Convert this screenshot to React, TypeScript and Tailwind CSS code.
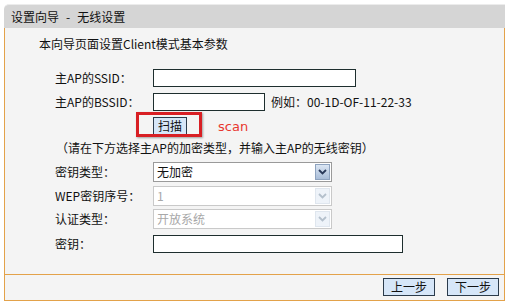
import React from "react";

const font = { fontFamily: '"Noto Sans CJK SC", "Liberation Sans", sans-serif' };

function Chevron({ disabled }: { disabled?: boolean }) {
  return (
    <svg width="9" height="6" viewBox="0 0 9 6">
      <path
        d="M1 1 L4.5 4.5 L8 1"
        fill="none"
        stroke={disabled ? "#b4c0cc" : "#2a3a5a"}
        strokeWidth="1.8"
      />
    </svg>
  );
}

function FakeSelect({ value, disabled }: { value: string; disabled?: boolean }) {
  return (
    <div
      className={`flex h-[20px] w-[179px] items-stretch border bg-white ${
        disabled ? "border-[#c9c9c9] text-[#a8a8a8]" : "border-[#9a9a9a] text-[#111]"
      }`}
    >
      <div className="flex flex-1 items-center pl-[3px] text-[12px] leading-none">{value}</div>
      <div
        className={`m-px flex w-[15px] items-center justify-center border ${
          disabled
            ? "border-[#dfe6ee] bg-[#eef3f9]"
            : "border-[#8ea3bf] bg-gradient-to-b from-[#dbe6f3] to-[#a9bdd8]"
        }`}
      >
        <Chevron disabled={disabled} />
      </div>
    </div>
  );
}

function Row({ label, children, mt }: { label: string; children: React.ReactNode; mt: string }) {
  return (
    <div className={`flex items-center ${mt}`}>
      <div className="w-[148px] pl-[50px] text-[12px] leading-none text-[#111]">{label}</div>
      {children}
    </div>
  );
}

function Btn({ text, w }: { text: string; w: string }) {
  return (
    <button
      className={`${w} flex h-[18px] items-center justify-center border border-[#2b3b4b] bg-[#d6e6f8] text-[12px] leading-none text-[#111]`}
    >
      {text}
    </button>
  );
}

export default function App() {
  return (
    <div className="h-[303px] w-[508px] bg-white pl-[4px] pt-[4px]" style={font}>
      <div className="w-[501px]">
        <div className="flex h-[24px] items-center rounded-tl-[5px] border-t border-[#ececec] bg-[#d5d5d5] pl-[7px] text-[12px] text-[#111]">
          <span>设置向导</span>
          <span className="mx-[7px]">-</span>
          <span>无线设置</span>
        </div>
        <div className="border-x border-b border-[#e3a24a] bg-[#f4f4f4]">
          <div className="h-[246px] pt-[8px]">
            <div className="h-[16px] pl-[34px] text-[12px] leading-[16px] text-[#111]">
              本向导页面设置Client模式基本参数
            </div>
            <Row label="主AP的SSID：" mt="mt-[17px]">
              <div className="h-[18px] w-[203px] border border-[#1e2e2e] bg-white" />
            </Row>
            <Row label="主AP的BSSID：" mt="mt-[6px]">
              <div className="h-[18px] w-[112px] border border-[#1e2e2e] bg-white" />
              <span className="ml-[6px] text-[12px] leading-none text-[#111]">例如：00-1D-OF-11-22-33</span>
            </Row>
            <div className="mt-[6px] flex items-center pl-[148px]">
              <div className="relative">
                <Btn text="扫描" w="w-[34px] h-[16px]" />
                <div className="absolute left-[-17px] top-[-5px] h-[25px] w-[66px] border-[3px] border-[#d81f24] shadow-[1px_1px_2px_rgba(0,0,0,0.35)]" />
              </div>
              <span
                className="ml-[31px] leading-none text-[#e8372e]"
                style={{ fontFamily: '"DejaVu Sans", sans-serif', fontSize: 13 }}
              >
                scan
              </span>
            </div>
            <div className="mt-[5px] h-[16px] pl-[51px] text-[12px] leading-[16px] text-[#111]">
              （请在下方选择主AP的加密类型，并输入主AP的无线密钥）
            </div>
            <Row label="密钥类型：" mt="mt-[6px]">
              <FakeSelect value="无加密" />
            </Row>
            <Row label="WEP密钥序号：" mt="mt-[4px]">
              <FakeSelect value="1" disabled />
            </Row>
            <Row label="认证类型：" mt="mt-[3px]">
              <FakeSelect value="开放系统" disabled />
            </Row>
            <Row label="密钥：" mt="mt-[6px]">
              <div className="h-[18px] w-[250px] border border-[#1e2e2e] bg-white" />
            </Row>
          </div>
          <div className="flex h-[26px] justify-end gap-[12px] border-t border-[#e3a24a] pr-[5px] pt-[3px]">
            <Btn text="上一步" w="w-[52px]" />
            <Btn text="下一步" w="w-[52px]" />
          </div>
        </div>
      </div>
    </div>
  );
}
